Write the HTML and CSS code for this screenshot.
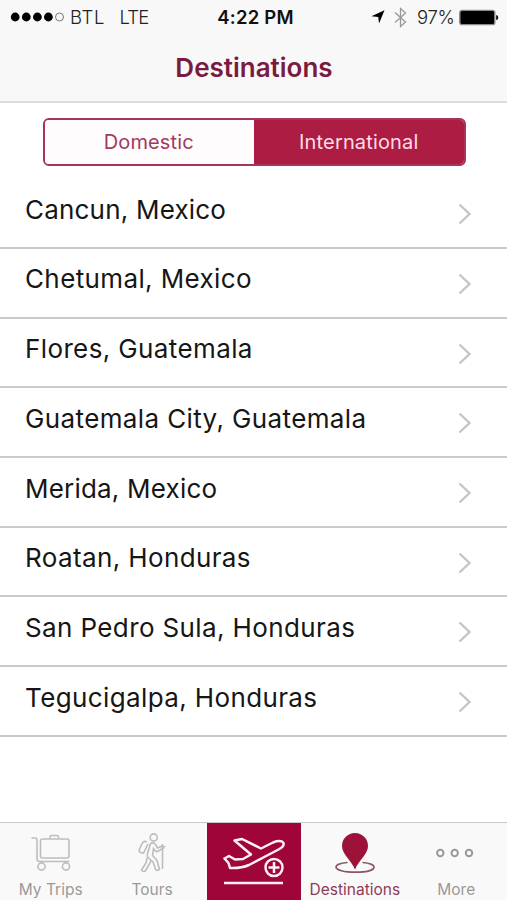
FILE: index.html
```html
<!DOCTYPE html>
<html lang="en">
<head>
<meta charset="utf-8">
<title>Destinations</title>
<link rel="stylesheet" href="styles.css">
</head>
<body>
<div class="app">
  <header class="header">
    <div class="status">
      <div class="status-left">
        <svg class="signal" width="54" height="12" viewBox="0 0 54 12"><circle cx="5.2" cy="6" r="4.4"/><circle cx="16.3" cy="6" r="4.4"/><circle cx="27.4" cy="6" r="4.4"/><circle cx="38.4" cy="6" r="4.4"/><circle class="signal-off" cx="49.5" cy="6" r="4"/></svg>
        <span class="carrier">BTL</span>
        <span class="network">LTE</span>
      </div>
      <span class="clock">4:22 PM</span>
      <div class="status-right">
        <svg class="location" width="14" height="14" viewBox="0 0 14 14"><path d="M13.5.3 8 13.6 7.3 7 .4 6.2z"/></svg>
        <svg class="bluetooth" width="13" height="21" viewBox="0 0 13 21"><path d="M1 5.5 11.5 15 6.5 19.5v-18L11.5 6 1 15.5"/></svg>
        <span class="percent">97%</span>
        <svg class="battery" width="40" height="17" viewBox="0 0 40 17"><rect x=".8" y="1.4" width="35" height="14.2" rx="2.2" fill="#000" stroke="#8b8b8b" stroke-width="1.4"/><path d="M37.2 6q2 0 2 2.5t-2 2.5z"/></svg>
      </div>
    </div>
    <h1 class="title">Destinations</h1>
  </header>
  <main class="content">
    <div class="segments">
      <button class="segment">Domestic</button>
      <button class="segment segment-active">International</button>
    </div>
    <ul class="list">
      <li class="row"><span class="snug">Cancun, Mexico</span><svg class="chevron" viewBox="0 0 14 22"><path d="m1.5 1.5 10 9.5-10 9.5"/></svg></li>
      <li class="row"><span>Chetumal, Mexico</span><svg class="chevron" viewBox="0 0 14 22"><path d="m1.5 1.5 10 9.5-10 9.5"/></svg></li>
      <li class="row"><span>Flores, Guatemala</span><svg class="chevron" viewBox="0 0 14 22"><path d="m1.5 1.5 10 9.5-10 9.5"/></svg></li>
      <li class="row"><span>Guatemala City, Guatemala</span><svg class="chevron" viewBox="0 0 14 22"><path d="m1.5 1.5 10 9.5-10 9.5"/></svg></li>
      <li class="row"><span class="snug">Merida, Mexico</span><svg class="chevron" viewBox="0 0 14 22"><path d="m1.5 1.5 10 9.5-10 9.5"/></svg></li>
      <li class="row"><span>Roatan, Honduras</span><svg class="chevron" viewBox="0 0 14 22"><path d="m1.5 1.5 10 9.5-10 9.5"/></svg></li>
      <li class="row"><span>San Pedro Sula, Honduras</span><svg class="chevron" viewBox="0 0 14 22"><path d="m1.5 1.5 10 9.5-10 9.5"/></svg></li>
      <li class="row"><span>Tegucigalpa, Honduras</span><svg class="chevron" viewBox="0 0 14 22"><path d="m1.5 1.5 10 9.5-10 9.5"/></svg></li>
    </ul>
  </main>
  <nav class="tabs">
    <a class="tab">
      <svg class="tab-icon" width="44" height="48" viewBox="0 0 44 48"><path d="M2.500 6H6q2 0 2 2v18.500q0 3 3 3h29.500"/><rect x="11.500" y="7" width="28.500" height="19" rx="2"/><path d="M21 6.500V5q0-1.500 1.500-1.500h5.500q1.500 0 1.500 1.500v1.500"/><circle cx="12.500" cy="34.500" r="3.600"/><circle cx="37" cy="34.500" r="3.600"/></svg>
      <span>My Trips</span>
    </a>
    <a class="tab">
      <svg class="tab-icon" width="44" height="48" viewBox="0 0 44 48"><circle cx="23.700" cy="5.500" r="3.600"/><path d="M17 10q-3-1.500-4.500 1l-3 6q-1 2.500 1 3.500l3 .5 4.500-9"/><path d="M20.500 11.500q3-1.500 5 1l2 3.500 4.500-2 1.500 2-6 3.500q-1.500.5-2.500-1l-1.500-2-1 7 4.500 5 2.500 9q-2.500 2-4-.5l-2.500-7-5-4.500q-1-1-.7-3z"/><path d="m17 26-1 5-4.500 7q2.500 3 4.500 0l4-7 1-2.500M32.500 12v25M30.500 14.500h5"/></svg>
      <span>Tours</span>
    </a>
    <a class="tab tab-book" aria-label="Book">
      <svg width="94" height="77" viewBox="0 0 94 77"><path d="m17.500 35.500 4.500-2.500 6 3.500 8-.5 8-4.500L27.500 17.500l7.500-1.500 19 9.500 12-6q8-3 10.500.5 1 3.500-5 6.500L42 42q-8 3.500-19 3l-1.500-5z"/><circle cx="67" cy="44.500" r="10.500" fill="#a0053a" stroke="none"/><circle cx="67" cy="44.500" r="8.500"/><path d="M67 39v11M61.500 44.500h11M17 60h59"/></svg>
    </a>
    <a class="tab tab-current">
      <svg class="tab-icon" width="44" height="48" viewBox="0 0 44 48"><path class="ring" d="M14.500 30.500C7 31 3 33 3 35c0 3 8 5.200 19.500 5.200S41 38 41 35c0-2-4-4-11.500-4.500"/><path class="pin" d="M22 37.500C18 28 9 22 9 14a13 13 0 0 1 26 0C35 22 26 28 22 37.500z"/></svg>
      <span>Destinations</span>
    </a>
    <a class="tab">
      <svg class="tab-icon more" width="44" height="48" viewBox="0 0 44 48"><circle cx="6.300" cy="21" r="3.200"/><circle cx="20.700" cy="21" r="3.200"/><circle cx="35" cy="21" r="3.200"/></svg>
      <span>More</span>
    </a>
  </nav>
</div>
</body>
</html>
```
FILE: styles.css
```css
* { box-sizing: border-box; }
body { margin: 0; font-family: Inter, "Liberation Sans", sans-serif; background: #fff; color: #161616; }
.app { width: 507px; height: 900px; display: flex; flex-direction: column; overflow: hidden; }
.header { height: 103px; background: #f8f8f8; border-bottom: 2px solid #dcdcdc; flex: none; }
.status { height: 34px; display: grid; grid-template-columns: 1fr auto 1fr; align-items: center; padding: 0 8px 0 10px; font-size: 18.500px; font-weight: 300; color: #222; white-space: nowrap; }
.status-left, .status-right { display: flex; align-items: center; }
.status-right { justify-content: flex-end; }
.signal-off { fill: none; stroke: #777; stroke-width: 1; }
.carrier { margin-left: 6px; letter-spacing: .6px; }
.network { margin-left: 14.500px; letter-spacing: -.8px; }
.clock { font-weight: 600; letter-spacing: .2px; color: #111; padding-left: 2px; }
.bluetooth { margin: 0 10px 0 9px; fill: none; stroke: #999; stroke-width: 1.300; }
.percent { letter-spacing: -.3px; margin-right: 4.500px; }
.title { margin: 16px 0 0; padding-left: 1px; text-align: center; font-size: 26px; line-height: 36px; font-weight: 600; color: #7a1a3e; }
.content { flex: 1; }
.segments { display: flex; width: 423px; height: 47.500px; margin: 15px 0 0 42.500px; border: 2px solid #a83358; border-radius: 6px; overflow: hidden; }
.segment { flex: 1; border: 0; padding: 0 1px 0 0; font: 400 20px/45px Inter, "Liberation Sans", sans-serif; letter-spacing: .15px; color: #a23a5c; background: #fefcfd; }
.segment-active { padding: 0; background: #ad1c43; color: #ffdce5; }
.segment { width: 50%; flex: none; }
.list { list-style: none; margin: 13.800px 0 0; padding: 0; }
.row { height: 69.700px; border-bottom: 2px solid #cacaca; display: flex; justify-content: space-between; align-items: flex-start; padding: 14.500px 35px 0 25px; font-size: 26px; line-height: 32px; letter-spacing: .38px; white-space: nowrap; }
.snug { letter-spacing: .2px; }
.chevron { width: 14px; height: 22px; margin-top: 9.500px; fill: none; stroke: #c5c5c5; stroke-width: 2.400; }
.tabs { height: 78px; flex: none; display: flex; background: #f9f9f9; border-top: 1px solid #c9c9c9; }
.tab { width: 101.400px; flex: none; display: flex; flex-direction: column; align-items: center; font-size: 15.500px; line-height: 20px; color: #999; padding-top: 8.500px; white-space: nowrap; }
.tab-icon { fill: none; stroke: #bdbdbd; stroke-width: 1.600; }
.tab-book { width: 94px; margin: 0 3.200px 0 4.200px; padding: 0; background: #a0053a; fill: none; stroke: #fff0f5; stroke-width: 2.500; stroke-linejoin: round; }
.tab-current { color: #8c3b58; }
.ring { stroke: #8a5565; stroke-width: 1.700; }
.pin { fill: #9c1238; stroke: none; }
.more { stroke: #999; stroke-width: 2; }
```
